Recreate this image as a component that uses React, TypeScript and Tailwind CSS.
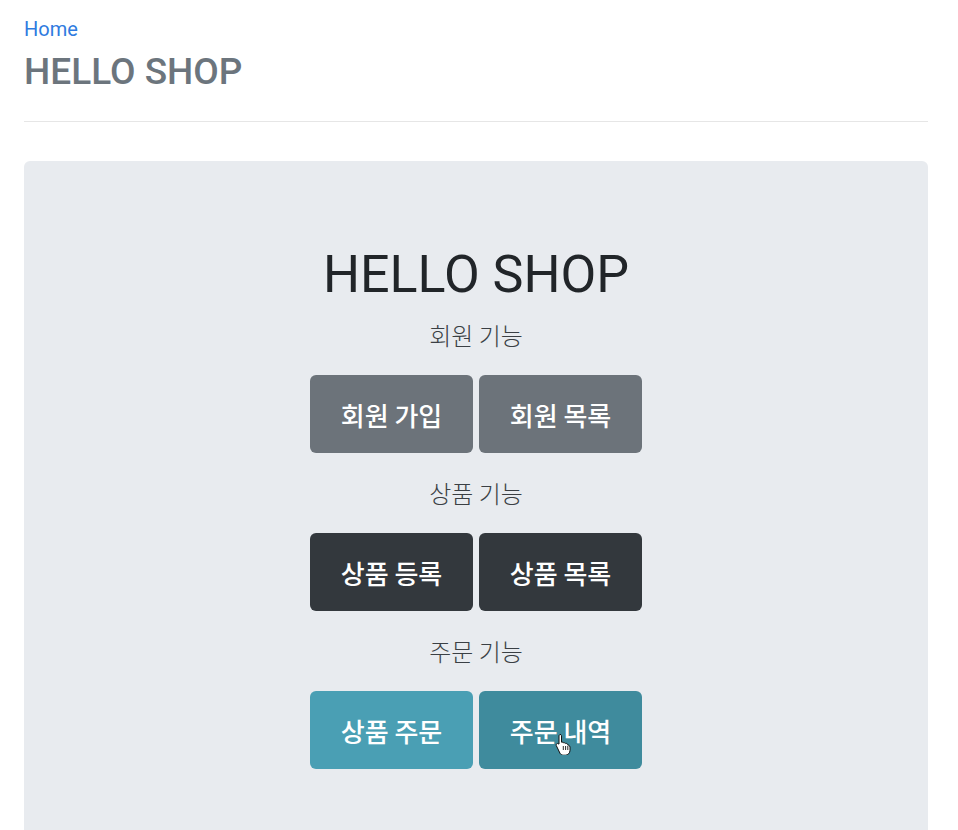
const latin = "font-['Roboto','Noto_Sans_CJK_KR',sans-serif]";
const korean = "font-['Noto_Sans_CJK_KR','Roboto',sans-serif]";

const HandCursor = () => (
  <svg width="18" height="22" viewBox="0 0 18 22" className="absolute left-[76px] top-[42px]">
    <path
      d="M5 1.5c.9 0 1.5.6 1.5 1.5v6.2l.6-.1c.8-.1 1.4.3 1.6.9.7-.4 1.6-.2 2 .5.7-.3 1.6 0 1.9.8l.3.9c.2-.1.5-.1.8 0 .8.2 1.3 1 1.3 1.9v3.2c0 2.8-2 4.9-4.7 4.9H8.6c-1.5 0-2.8-.7-3.6-1.9L1.4 12.8c-.5-.8-.2-1.7.5-2.1.7-.4 1.5-.2 2 .4l-.1.1.2-.2V3c0-.9.6-1.5 1.5-1.5Z"
      fill="#fff"
      stroke="#111"
      strokeWidth="1"
      strokeLinejoin="round"
    />
    <path d="M8.3 13v4M10.6 13v4M12.8 13v4" stroke="#111" strokeWidth="0.9" />
  </svg>
);

interface ButtonProps {
  label: string;
  color: string;
  cursor?: boolean;
}

const ShopButton = ({ label, color, cursor }: ButtonProps) => (
  <div
    className={`relative flex h-[78px] w-[163px] items-center justify-center rounded-[6px] text-[26px] font-medium text-white ${color} ${korean}`}
  >
    {label}
    {cursor && <HandCursor />}
  </div>
);

const Section = ({ title, buttons, first }: { title: string; buttons: ButtonProps[]; first?: boolean }) => (
  <div className="flex flex-col items-center">
    <p className={`${first ? "mt-[11px]" : "mt-[22px]"} text-[24px] leading-[36px] font-light text-[#3a3f44] ${korean}`}>
      {title}
    </p>
    <div className="mt-[22px] flex flex-row gap-[6px]">
      {buttons.map((b) => (
        <ShopButton key={b.label} {...b} />
      ))}
    </div>
  </div>
);

export default function App() {
  return (
    <div className="min-h-screen bg-white">
      <div className="ml-[24px] w-[904px]">
        <div className="flex flex-col border-b border-[#e6e6e6] pt-[14px] pb-[28px]">
          <a className={`text-[20px] leading-[30px] text-[#2f7be0] ${latin}`}>Home</a>
          <h3 className={`mt-[6px] text-[37px] leading-[43px] font-medium text-[#6c757d] ${latin}`}>HELLO SHOP</h3>
        </div>
        <div className="mt-[39px] flex flex-col items-center rounded-[6px] bg-[#e8ebef] pt-[83px] pb-[110px]">
          <h1 className={`text-[52px] leading-[62px] font-normal text-[#212529] ${latin}`}>HELLO SHOP</h1>
          <Section
            first
            title="회원 기능"
            buttons={[
              { label: "회원 가입", color: "bg-[#6c737a]" },
              { label: "회원 목록", color: "bg-[#6c737a]" },
            ]}
          />
          <Section
            title="상품 기능"
            buttons={[
              { label: "상품 등록", color: "bg-[#33383d]" },
              { label: "상품 목록", color: "bg-[#33383d]" },
            ]}
          />
          <Section
            title="주문 기능"
            buttons={[
              { label: "상품 주문", color: "bg-[#4a9fb4]" },
              { label: "주문 내역", color: "bg-[#3f8b9d]", cursor: true },
            ]}
          />
        </div>
      </div>
    </div>
  );
}
